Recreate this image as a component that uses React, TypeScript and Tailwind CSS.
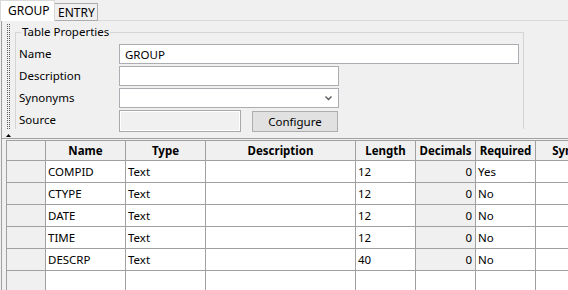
const columns = [
  { label: "Name", w: "w-[80px]" },
  { label: "Type", w: "w-[80px]" },
  { label: "Description", w: "w-[150px]" },
  { label: "Length", w: "w-[60px]" },
  { label: "Decimals", w: "w-[60px]" },
  { label: "Required", w: "w-[60px]" },
  { label: "Synonyms", w: "w-[92px]" },
];

const fields = [
  { name: "COMPID", type: "Text", length: "12", required: "Yes" },
  { name: "CTYPE", type: "Text", length: "12", required: "No" },
  { name: "DATE", type: "Text", length: "12", required: "No" },
  { name: "TIME", type: "Text", length: "12", required: "No" },
  { name: "DESCRP", type: "Text", length: "40", required: "No" },
];

const cell = "h-[22px] border-r border-b border-[#a0a0a0] leading-[21px] px-[2px] whitespace-nowrap overflow-hidden";

function GripDots() {
  return (
    <svg width="3" height="106" className="block">
      <defs>
        <pattern id="grip" width="3" height="2" patternUnits="userSpaceOnUse">
          <rect x="0" y="0" width="1" height="1" fill="#5a5a5a" />
          <rect x="2" y="0" width="1" height="1" fill="#5a5a5a" />
        </pattern>
      </defs>
      <rect width="3" height="106" fill="url(#grip)" />
    </svg>
  );
}

export default function App() {
  return (
    <div className="w-[568px] h-[290px] overflow-hidden bg-[#f0f0f0] text-[11.5px] text-black flex flex-col font-['Noto_Sans',sans-serif]">
      {/* tabs */}
      <div className="flex h-[21px] items-end shrink-0">
        <div className="h-[21px] w-[55px] border border-b-0 border-[#d9d9d9] bg-white pl-[7px] leading-[19px] text-[12px]">GROUP</div>
        <div className="h-[18px] w-[43px] border border-l-0 border-[#acacac] bg-[#f0f0f0] pl-[3px] leading-[17px] text-[12px]">ENTRY</div>
        <div className="flex-1 h-full border-b border-[#d9d9d9]" />
      </div>

      <div className="flex-1 ml-[1px] border-l border-[#a0a0a0] flex flex-col min-h-0">
        {/* properties panel */}
        <div className="h-[118px] shrink-0 border-b border-[#a0a0a0] flex overflow-hidden">
          <div className="w-[13px] flex flex-col pl-[5px] pt-[3px]">
            <GripDots />
            <svg width="5" height="3" className="block mt-auto mb-[1px] -ml-[1px]">
              <polygon points="0,3 2.5,0 5,3" fill="#000" />
            </svg>
          </div>
          <div className="relative mt-[11px] h-[97px] w-[509px] border border-b-0 border-[#d5d5d5] pl-[3px] pt-[11px]">
            <span className="absolute left-[5px] -top-[9px] px-[1px] bg-[#f0f0f0] leading-[16px]">Table Properties</span>

            <div className="flex items-center h-[20px] mb-[2px]">
              <label className="w-[100px]">Name</label>
              <input readOnly value="GROUP" className="h-[20px] w-[400px] border border-[#abadb3] bg-white pl-[5px] outline-none" />
            </div>
            <div className="flex items-center h-[20px] mb-[2px]">
              <label className="w-[100px]">Description</label>
              <input readOnly value="" className="h-[20px] w-[220px] border border-[#abadb3] bg-white pl-[5px] outline-none" />
            </div>
            <div className="flex items-center h-[20px] mb-[2px]">
              <label className="w-[100px]">Synonyms</label>
              <div className="h-[20px] w-[220px] border border-[#abadb3] bg-white flex items-center justify-end pr-[6px]">
                <svg width="7" height="5" viewBox="0 0 7 5">
                  <path d="M0.5 0.5 L3.5 3.5 L6.5 0.5" fill="none" stroke="#555" strokeWidth="1.3" />
                </svg>
              </div>
            </div>
            <div className="flex items-start h-[22px]">
              <label className="w-[100px] leading-[20px]">Source</label>
              <div className="h-[22px] w-[122px] border border-[#a9a9a9] bg-[#f0f0f0] shadow-[inset_1px_1px_0_#fff,inset_-1px_-1px_0_#fff]" />
              <button className="ml-[11px] mt-[1px] h-[21px] w-[86px] border border-[#adadad] bg-[#e1e1e1] leading-[19px]">Configure</button>
            </div>
          </div>
        </div>

        {/* fields grid */}
        <div className="pt-[1px] pl-[4px]">
          <div className="border-t border-l border-[#a0a0a0] w-max bg-white">
            <div className="flex">
              <div className="w-[39px] h-[20px] border-r border-b border-[#a0a0a0] bg-[#f0f0f0]" />
              {columns.map((c) => (
                <div key={c.label} className={`${c.w} h-[20px] border-r border-b border-[#a0a0a0] bg-[#f0f0f0] font-bold text-center leading-[19px] whitespace-nowrap overflow-hidden`}>
                  {c.label}
                </div>
              ))}
            </div>
            {fields.map((f) => (
              <div key={f.name} className="flex">
                <div className={`w-[39px] ${cell} bg-[#f0f0f0]`} />
                <div className={`w-[80px] ${cell}`}>{f.name}</div>
                <div className={`w-[80px] ${cell}`}>{f.type}</div>
                <div className={`w-[150px] ${cell}`} />
                <div className={`w-[60px] ${cell}`}>{f.length}</div>
                <div className={`w-[60px] ${cell} bg-[#f0f0f0] text-right pr-[3px]`}>0</div>
                <div className={`w-[60px] ${cell}`}>{f.required}</div>
                <div className={`w-[92px] ${cell}`} />
              </div>
            ))}
            <div className="flex">
              <div className={`w-[39px] ${cell} bg-[#f0f0f0]`} />
              <div className={`w-[80px] ${cell}`} />
              <div className={`w-[80px] ${cell}`} />
              <div className={`w-[150px] ${cell}`} />
              <div className={`w-[60px] ${cell}`} />
              <div className={`w-[60px] ${cell}`} />
              <div className={`w-[60px] ${cell}`} />
              <div className={`w-[92px] ${cell}`} />
            </div>
          </div>
        </div>
      </div>
    </div>
  );
}
